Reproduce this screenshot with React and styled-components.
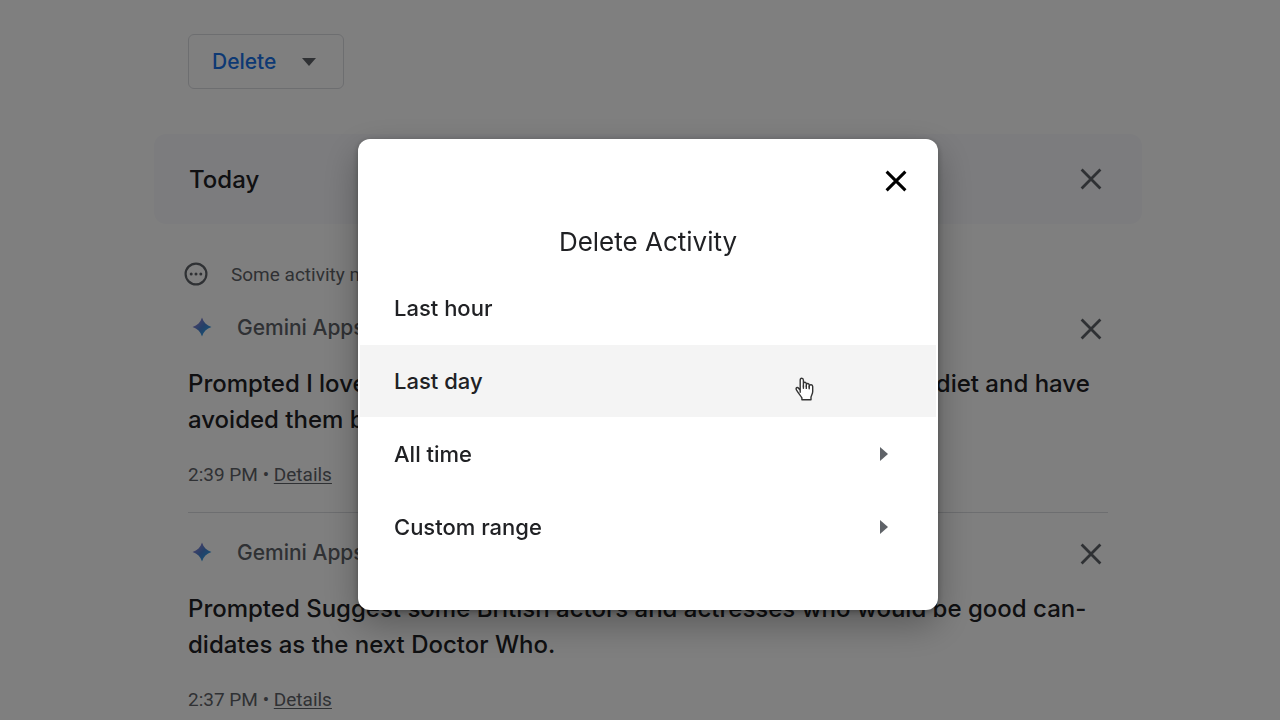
import React, { useState } from "react";
import styled, { createGlobalStyle } from "styled-components";

const GlobalStyle = createGlobalStyle`
  * {
    box-sizing: border-box;
  }

  body {
    margin: 0;
    overflow: hidden;
    background: white;
    color: #202124;
    font-family: Inter, "Liberation Sans", sans-serif;
  }

  button {
    font-family: inherit;
    cursor: pointer;
  }
`;

const Page = styled.main`
  padding: 34px 0 0 16px;
`;

const Content = styled.div`
  max-width: 988px;
  margin: 0 auto;
`;

const Toolbar = styled.div`
  padding: 0 34px;
  margin-bottom: 45px;
`;

const DeleteButton = styled.button`
  display: inline-flex;
  align-items: center;
  justify-content: space-between;
  width: 156px;
  height: 55px;
  padding: 0 27px 0 23px;
  border: 1px solid #dadce0;
  border-radius: 6px;
  background: transparent;
  color: #1a73e8;
  font-size: 21px;
  font-weight: 500;
`;

const DayHeader = styled.div`
  display: flex;
  align-items: center;
  justify-content: space-between;
  height: 90px;
  padding: 0 39px 0 35px;
  border-radius: 12px;
  background: #f8f9fc;
`;

const DayTitle = styled.h2`
  margin: 0;
  font-size: 24px;
  font-weight: 500;
`;

const IconButton = styled.button`
  display: flex;
  padding: 0;
  border: none;
  background: transparent;
  color: ${(props) => (props.$strong ? "#000" : "#5f6368")};
`;

const Notice = styled.p`
  display: flex;
  align-items: center;
  gap: 23px;
  height: 24px;
  margin: 38px 0 2px;
  padding: 0 30px;
  color: #5f6368;
  font-family: Roboto, "Liberation Sans", sans-serif;
  font-size: 19px;
`;

const Item = styled.article`
  margin: 0 34px;
  padding: 15px 0 26px;
  border-bottom: 1px solid #dadce0;
`;

const ItemHeader = styled.div`
  display: flex;
  align-items: center;
  height: 48px;
  padding: 0 5px 0 4px;
  color: #5f6368;
  font-size: 21px;
  font-weight: 500;

  ${IconButton} {
    padding-top: 4px;
  }
`;

const AppName = styled.span`
  flex: 1;
  margin-left: 25px;
`;

const Prompt = styled.p`
  margin: 15px 0 25px;
  font-size: 24px;
  font-weight: 500;
  line-height: 36px;
  white-space: nowrap;
`;

const Meta = styled.div`
  height: 23px;
  color: #5f6368;
  font-family: Roboto, "Liberation Sans", sans-serif;
  font-size: 19px;
  line-height: 24px;

  a {
    color: inherit;
    text-underline-offset: 2px;
  }
`;

const Overlay = styled.div`
  position: fixed;
  inset: 0;
  display: flex;
  align-items: flex-start;
  justify-content: center;
  padding: 139px 0 0 16px;
  background: rgba(0, 0, 0, 0.5);
`;

const Dialog = styled.div`
  width: 580px;
  max-width: 100%;
  padding-bottom: 47px;
  border-radius: 12px;
  background: white;
  box-shadow: 0 14px 36px rgba(0, 0, 0, 0.3), 0 2px 6px rgba(0, 0, 0, 0.3);
`;

const DialogTop = styled.div`
  display: flex;
  justify-content: flex-end;
  padding: 30px 30px 0;
`;

const DialogTitle = styled.h1`
  margin: 32px 0 13px;
  font-size: 26px;
  font-weight: 400;
  line-height: 34px;
  text-align: center;
`;

const Options = styled.div`
  display: flex;
  flex-direction: column;
  gap: 1px;
  padding: 0 2px;
`;

const Option = styled.button`
  position: relative;
  display: flex;
  align-items: center;
  justify-content: space-between;
  height: 72px;
  padding: 0 48px 0 34px;
  border: none;
  background: ${(props) => (props.$active ? "#f4f4f4" : "transparent")};
  color: #202124;
  font-size: 22px;
  font-weight: 500;
  text-align: left;
`;

const Pointer = styled.svg`
  position: absolute;
  top: 32px;
  right: 121px;
`;

const CloseIcon = ({ weight = 2.8 }) => (
  <svg width="24" height="24" viewBox="0 0 24 24" fill="none" stroke="currentColor" strokeWidth={weight}>
    <path d="M2.6 2.6 21.4 21.4M21.4 2.6 2.6 21.4" />
  </svg>
);

const DownArrow = () => (
  <svg width="14" height="8" viewBox="0 0 14 8" fill="#5f6368">
    <path d="M0 0h14L7 8z" />
  </svg>
);

const RightArrow = () => (
  <svg width="8" height="14" viewBox="0 0 8 14" fill="#5f6368">
    <path d="M0 0v14l8-7z" />
  </svg>
);

const DotsIcon = () => (
  <svg width="24" height="24" viewBox="0 0 24 24" fill="none">
    <circle cx="12" cy="12" r="10.4" stroke="#5f6368" strokeWidth="2.2" />
    <g fill="#5f6368">
      <circle cx="7.2" cy="12" r="1.5" />
      <circle cx="12" cy="12" r="1.5" />
      <circle cx="16.8" cy="12" r="1.5" />
    </g>
  </svg>
);

const GeminiIcon = () => (
  <svg width="20" height="20" viewBox="0 0 20 20">
    <defs>
      <linearGradient id="spark" x1="0" y1="0" x2="1" y2="1">
        <stop offset="0.2" stopColor="#8a80d0" />
        <stop offset="0.5" stopColor="#4a80d0" />
        <stop offset="0.8" stopColor="#2c9fe8" />
      </linearGradient>
    </defs>
    <path fill="url(#spark)" d="M10 0.5C11.4 5.4 14.6 8.6 19.5 10C14.6 11.4 11.4 14.6 10 19.5C8.6 14.6 5.4 11.4 0.5 10C5.4 8.6 8.6 5.4 10 0.5Z" />
  </svg>
);

const HandIcon = () => (
  <Pointer width="20" height="24" viewBox="0 0 20 24" fill="white" stroke="#333" strokeWidth="1.4" strokeLinejoin="round" strokeLinecap="round">
    <path d="M5.2 15.2V3.2C5.2 0.6 8.3 0.6 8.4 3.2V9.2V6.6C8.7 4.6 11.2 4.9 11.3 6.8V9.2V7.6C11.8 5.8 14.1 6.2 14.2 8V10V8.9C14.8 7.2 17.6 7.4 17.7 9.6V14.6C17.7 17 16.2 18.4 16 20.2V22.8H6.9V20.8C5.4 18.4 3.4 16.2 1.6 13.2C0.2 10.7 2.4 9.6 3.8 11.5L5.2 13.4" />
    <path fill="none" d="M8.4 9V11.2M11.3 9V11.4M14.2 9.6V11.8" />
  </Pointer>
);

const activities = [
  {
    time: "2:39 PM",
    lines: [
      "Prompted I love potatoes but they are not really good for my own diet and have",
      "avoided them before",
    ],
  },
  {
    time: "2:37 PM",
    lines: [
      "Prompted Suggest some British actors and actresses who would be good can-",
      "didates as the next Doctor Who.",
    ],
  },
];

const options = [
  { label: "Last hour" },
  { label: "Last day" },
  { label: "All time", more: true },
  { label: "Custom range", more: true },
];

const Activity = ({ time, lines }) => (
  <Item>
    <ItemHeader>
      <GeminiIcon />
      <AppName>Gemini Apps</AppName>
      <IconButton aria-label="Delete activity item">
        <CloseIcon />
      </IconButton>
    </ItemHeader>
    <Prompt>
      {lines[0]}
      <br />
      {lines[1]}
    </Prompt>
    <Meta>
      {time} • <a href="#details">Details</a>
    </Meta>
  </Item>
);

const App = () => {
  const [open, setOpen] = useState(true);
  const [active, setActive] = useState("Last day");

  return (
    <>
      <GlobalStyle />
      <Page>
        <Content>
          <Toolbar>
            <DeleteButton onClick={() => setOpen(true)}>
              Delete
              <DownArrow />
            </DeleteButton>
          </Toolbar>
          <DayHeader>
            <DayTitle>Today</DayTitle>
            <IconButton aria-label="Delete today">
              <CloseIcon />
            </IconButton>
          </DayHeader>
          <Notice>
            <DotsIcon />
            Some activity may not appear yet
          </Notice>
          {activities.map((activity) => (
            <Activity key={activity.time} {...activity} />
          ))}
        </Content>
      </Page>
      {open && (
        <Overlay>
          <Dialog role="dialog" aria-modal="true" aria-labelledby="dialog-title">
            <DialogTop>
              <IconButton $strong aria-label="Close" onClick={() => setOpen(false)}>
                <CloseIcon weight={3} />
              </IconButton>
            </DialogTop>
            <DialogTitle id="dialog-title">Delete Activity</DialogTitle>
            <Options>
              {options.map(({ label, more }) => (
                <Option key={label} $active={active === label} onMouseEnter={() => setActive(label)}>
                  {label}
                  {more && <RightArrow />}
                  {active === label && <HandIcon />}
                </Option>
              ))}
            </Options>
          </Dialog>
        </Overlay>
      )}
    </>
  );
};

export default App;
